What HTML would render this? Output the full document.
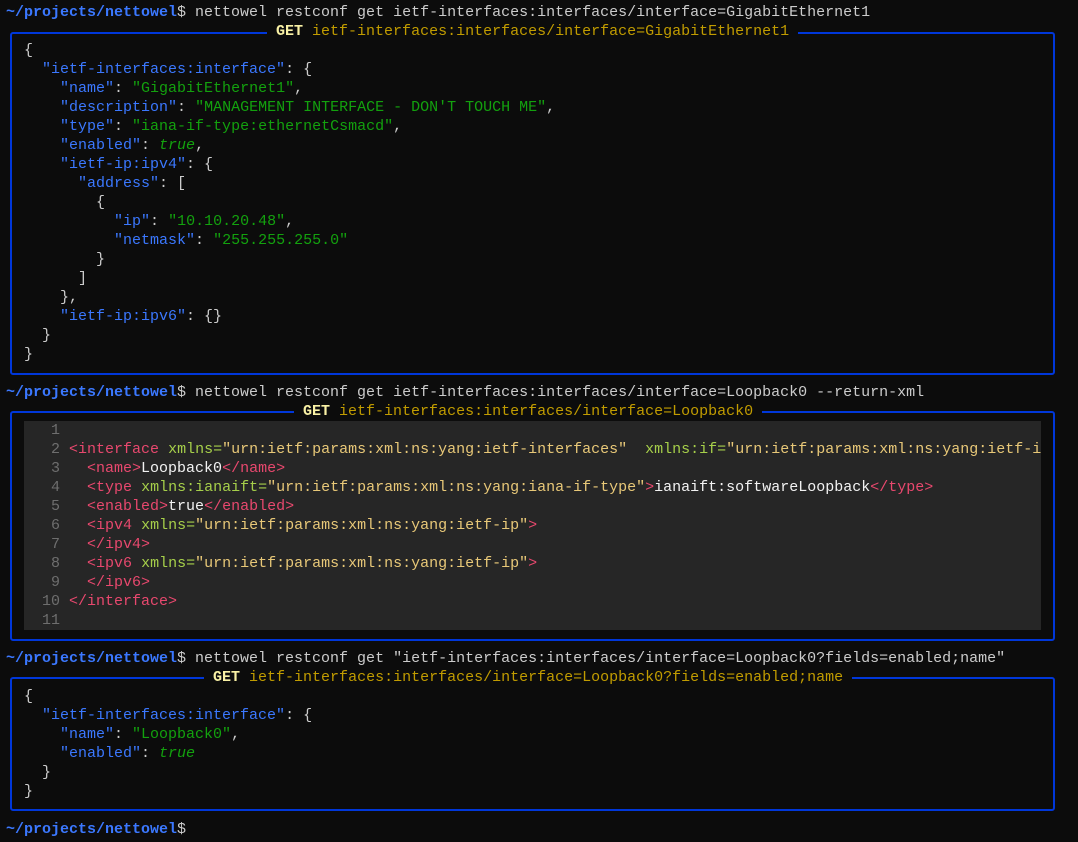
<!DOCTYPE html>
<html><head><meta charset="utf-8"><style>
html,body{margin:0;padding:0;background:#0c0c0c;width:1078px;height:842px;overflow:hidden}
body{position:relative;font-family:"Liberation Mono","DejaVu Sans Mono",monospace;font-size:15px;color:#cccccc}
.r{position:absolute;left:6px;height:19px;line-height:19px;white-space:pre}
.box{position:absolute;left:10px;width:1045px;border:2px solid #0037da;border-radius:3px;box-sizing:border-box}
.t{position:absolute;height:19px;line-height:19px;white-space:pre;background:#0c0c0c}
.p{color:#3b78ff;font-weight:bold}
.k{color:#3b78ff}.s{color:#13a10e}.b{color:#13a10e;font-style:italic}
.g{color:#f9f1a5;font-weight:bold}.y{color:#c19c00}
.panel{position:absolute;left:24px;width:1017px;top:421px;height:209px;background:#262626}
.n{color:#6e6e6e}.tg{color:#e8486e}.at{color:#a6cf4a}.v{color:#e8c878}.wt{color:#f2f2f2}
</style></head><body>
<div class="box" style="top:32px;height:343px"></div>
<div class="box" style="top:411px;height:230px"></div>
<div class="box" style="top:677px;height:134px"></div>
<div class="panel"></div>

<div class="t" style="top:22px;left:267px"> <span class="g">GET</span> <span class="y">ietf-interfaces:interfaces/interface=GigabitEthernet1</span> </div>
<div class="t" style="top:402px;left:294px"> <span class="g">GET</span> <span class="y">ietf-interfaces:interfaces/interface=Loopback0</span> </div>
<div class="t" style="top:668px;left:204px"> <span class="g">GET</span> <span class="y">ietf-interfaces:interfaces/interface=Loopback0?fields=enabled;name</span> </div>

<div class="r" style="top:3px"><span class="p">~/projects/nettowel</span>$ nettowel restconf get ietf-interfaces:interfaces/interface=GigabitEthernet1</div>
<div class="r" style="top:41px">  {</div>
<div class="r" style="top:60px">    <span class="k">"ietf-interfaces:interface"</span>: {</div>
<div class="r" style="top:79px">      <span class="k">"name"</span>: <span class="s">"GigabitEthernet1"</span>,</div>
<div class="r" style="top:98px">      <span class="k">"description"</span>: <span class="s">"MANAGEMENT INTERFACE - DON'T TOUCH ME"</span>,</div>
<div class="r" style="top:117px">      <span class="k">"type"</span>: <span class="s">"iana-if-type:ethernetCsmacd"</span>,</div>
<div class="r" style="top:136px">      <span class="k">"enabled"</span>: <span class="b">true</span>,</div>
<div class="r" style="top:155px">      <span class="k">"ietf-ip:ipv4"</span>: {</div>
<div class="r" style="top:174px">        <span class="k">"address"</span>: [</div>
<div class="r" style="top:193px">          {</div>
<div class="r" style="top:212px">            <span class="k">"ip"</span>: <span class="s">"10.10.20.48"</span>,</div>
<div class="r" style="top:231px">            <span class="k">"netmask"</span>: <span class="s">"255.255.255.0"</span></div>
<div class="r" style="top:250px">          }</div>
<div class="r" style="top:269px">        ]</div>
<div class="r" style="top:288px">      },</div>
<div class="r" style="top:307px">      <span class="k">"ietf-ip:ipv6"</span>: {}</div>
<div class="r" style="top:326px">    }</div>
<div class="r" style="top:345px">  }</div>

<div class="r" style="top:383px"><span class="p">~/projects/nettowel</span>$ nettowel restconf get ietf-interfaces:interfaces/interface=Loopback0 --return-xml</div>
<div class="r" style="top:421px"><span class="n">     1</span></div>
<div class="r" style="top:440px;width:1035px;overflow:hidden"><span class="n">     2</span> <span class="tg">&lt;interface</span> <span class="at">xmlns=</span><span class="v">"urn:ietf:params:xml:ns:yang:ietf-interfaces"</span>  <span class="at">xmlns:if=</span><span class="v">"urn:ietf:params:xml:ns:yang:ietf-interfaces"</span></div>
<div class="r" style="top:459px"><span class="n">     3</span>   <span class="tg">&lt;name&gt;</span><span class="wt">Loopback0</span><span class="tg">&lt;/name&gt;</span></div>
<div class="r" style="top:478px"><span class="n">     4</span>   <span class="tg">&lt;type</span> <span class="at">xmlns:ianaift=</span><span class="v">"urn:ietf:params:xml:ns:yang:iana-if-type"</span><span class="tg">&gt;</span><span class="wt">ianaift:softwareLoopback</span><span class="tg">&lt;/type&gt;</span></div>
<div class="r" style="top:497px"><span class="n">     5</span>   <span class="tg">&lt;enabled&gt;</span><span class="wt">true</span><span class="tg">&lt;/enabled&gt;</span></div>
<div class="r" style="top:516px"><span class="n">     6</span>   <span class="tg">&lt;ipv4</span> <span class="at">xmlns=</span><span class="v">"urn:ietf:params:xml:ns:yang:ietf-ip"</span><span class="tg">&gt;</span></div>
<div class="r" style="top:535px"><span class="n">     7</span>   <span class="tg">&lt;/ipv4&gt;</span></div>
<div class="r" style="top:554px"><span class="n">     8</span>   <span class="tg">&lt;ipv6</span> <span class="at">xmlns=</span><span class="v">"urn:ietf:params:xml:ns:yang:ietf-ip"</span><span class="tg">&gt;</span></div>
<div class="r" style="top:573px"><span class="n">     9</span>   <span class="tg">&lt;/ipv6&gt;</span></div>
<div class="r" style="top:592px"><span class="n">    10</span> <span class="tg">&lt;/interface&gt;</span></div>
<div class="r" style="top:611px"><span class="n">    11</span></div>

<div class="r" style="top:649px"><span class="p">~/projects/nettowel</span>$ nettowel restconf get "ietf-interfaces:interfaces/interface=Loopback0?fields=enabled;name"</div>
<div class="r" style="top:687px">  {</div>
<div class="r" style="top:706px">    <span class="k">"ietf-interfaces:interface"</span>: {</div>
<div class="r" style="top:725px">      <span class="k">"name"</span>: <span class="s">"Loopback0"</span>,</div>
<div class="r" style="top:744px">      <span class="k">"enabled"</span>: <span class="b">true</span></div>
<div class="r" style="top:763px">    }</div>
<div class="r" style="top:782px">  }</div>
<div class="r" style="top:820px"><span class="p">~/projects/nettowel</span>$</div>
</body></html>
